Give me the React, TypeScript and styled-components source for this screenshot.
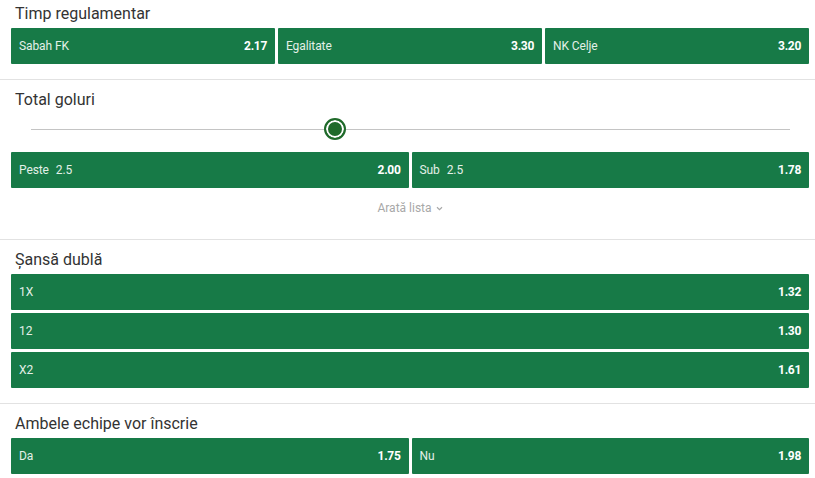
import React from "react";
import styled, { createGlobalStyle } from "styled-components";

const GlobalStyle = createGlobalStyle`
  html, body { margin: 0; padding: 0; background: #ffffff; }
  body { font-family: Roboto, "Noto Sans", Arial, sans-serif; }
  * { box-sizing: border-box; }
`;

const Page = styled.div`
  width: 815px;
  background: #ffffff;
`;

const Section = styled.section<{ $first?: boolean }>`
  padding: ${(p) => (p.$first ? "4px" : "10px")} 6px 15px 11px;
  border-bottom: 1px solid #e2e2e2;
  &:last-child { border-bottom: none; }
`;

const Title = styled.h3`
  margin: 0 0 4px 4px;
  font-size: 16px;
  line-height: 20px;
  font-weight: 400;
  color: #333333;
`;

const Row = styled.div<{ $cols: number }>`
  display: grid;
  grid-template-columns: repeat(${(p) => p.$cols}, 1fr);
  gap: 3px;
`;

const Stack = styled.div`
  display: flex;
  flex-direction: column;
  gap: 3px;
`;

const Odd = styled.button`
  height: 36px;
  margin: 0;
  border: none;
  border-radius: 1px;
  background: #177a47;
  padding: 0 8px 0 8px;
  display: flex;
  align-items: center;
  justify-content: space-between;
  font-family: Roboto, Arial, sans-serif;
  cursor: pointer;
`;

const Label = styled.span`
  display: flex;
  gap: 7px;
  font-size: 12px;
  color: #e3f0e8;
  letter-spacing: -0.1px;
`;

const Price = styled.span`
  font-size: 12px;
  font-weight: 700;
  color: #ffffff;
  letter-spacing: -0.3px;
`;

const SliderWrap = styled.div`
  position: relative;
  height: 30px;
  margin: 0 19px 8px 20px;
  display: flex;
  align-items: center;
`;

const Track = styled.div`
  flex: 1;
  height: 1px;
  background: #c4c4c4;
`;

const Thumb = styled.div`
  position: absolute;
  top: 50%;
  width: 22px;
  height: 22px;
  margin: -11px 0 0 -11px;
  border-radius: 50%;
  background: #1f6a2a;
  border: 2px solid #1f6a2a;
  box-shadow: inset 0 0 0 2px #ffffff;
`;

const ShowMore = styled.div`
  padding: 12px 0 8px;
  display: flex;
  justify-content: center;
  align-items: center;
  gap: 4px;
  font-size: 12px;
  line-height: 16px;
  color: #a8a8a8;
`;

type OddItem = { label: string; line?: string; price: string };

const OddButton = ({ item }: { item: OddItem }) => (
  <Odd>
    <Label>
      <span>{item.label}</span>
      {item.line && <span>{item.line}</span>}
    </Label>
    <Price>{item.price}</Price>
  </Odd>
);

const fullTime: OddItem[] = [
  { label: "Sabah FK", price: "2.17" },
  { label: "Egalitate", price: "3.30" },
  { label: "NK Celje", price: "3.20" },
];

const totals: OddItem[] = [
  { label: "Peste", line: "2.5", price: "2.00" },
  { label: "Sub", line: "2.5", price: "1.78" },
];

const doubleChance: OddItem[] = [
  { label: "1X", price: "1.32" },
  { label: "12", price: "1.30" },
  { label: "X2", price: "1.61" },
];

const btts: OddItem[] = [
  { label: "Da", price: "1.75" },
  { label: "Nu", price: "1.98" },
];

export default function App() {
  const sliderPos = 40;
  return (
    <Page>
      <GlobalStyle />
      <Section $first>
        <Title>Timp regulamentar</Title>
        <Row $cols={3}>
          {fullTime.map((o) => (
            <OddButton key={o.label} item={o} />
          ))}
        </Row>
      </Section>

      <Section>
        <Title>Total goluri</Title>
        <SliderWrap>
          <Track />
          <Thumb style={{ left: `${sliderPos}%` }} />
        </SliderWrap>
        <Row $cols={2}>
          {totals.map((o) => (
            <OddButton key={o.label} item={o} />
          ))}
        </Row>
        <ShowMore>
          <span>Arată lista</span>
          <svg width="7" height="5" viewBox="0 0 7 5">
            <path d="M1 1.2 L3.5 3.6 L6 1.2" fill="none" stroke="#a8a8a8" strokeWidth="1.2" />
          </svg>
        </ShowMore>
      </Section>

      <Section>
        <Title>Șansă dublă</Title>
        <Stack>
          {doubleChance.map((o) => (
            <OddButton key={o.label} item={o} />
          ))}
        </Stack>
      </Section>

      <Section>
        <Title>Ambele echipe vor înscrie</Title>
        <Row $cols={2}>
          {btts.map((o) => (
            <OddButton key={o.label} item={o} />
          ))}
        </Row>
      </Section>
    </Page>
  );
}
